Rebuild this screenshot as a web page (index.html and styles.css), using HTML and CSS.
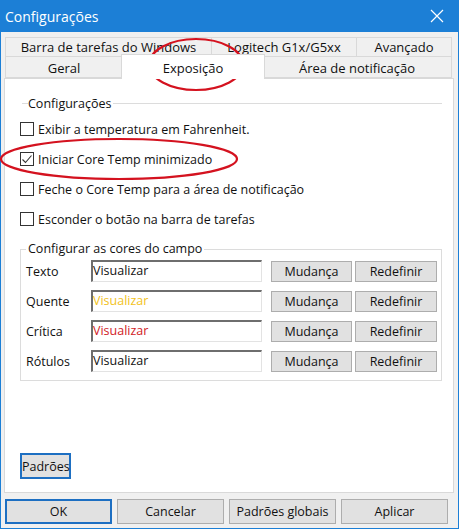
FILE: index.html
```html
<!DOCTYPE html>
<html lang="pt">
<head>
    <meta charset="UTF-8">
    <title>Configurações</title>
    <link rel="stylesheet" href="styles.css">
</head>
<body>
    <div class="window">
        <div class="titlebar">
            <span class="title">Configurações</span>
            <svg class="close" width="14" height="14" viewBox="0 0 14 14">
                <path d="M1 1 L13 13 M13 1 L1 13" stroke="#fff" stroke-width="1.2" fill="none"/>
            </svg>
        </div>
        <div class="dialog">
            <div class="tabs">
                <div class="tab-row">
                    <div class="tab t-barra">Barra de tarefas do Windows</div>
                    <div class="tab t-logi">Logitech G1x/G5xx</div>
                    <div class="tab t-avanc">Avançado</div>
                </div>
                <div class="tab-row">
                    <div class="tab t-geral">Geral</div>
                    <div class="tab t-expo active">Exposição</div>
                    <div class="tab t-area">Área de notificação</div>
                </div>
            </div>
            <div class="panel">
                <div class="section-title"><span>Configurações</span></div>
                <div class="checks">
                    <div class="check"><span class="box"></span>Exibir a temperatura em Fahrenheit.</div>
                    <div class="check"><span class="box">
                        <svg width="12" height="12" viewBox="0 0 12 12"><path d="M1.5 6.5 L4.5 9.5 L10.5 2.5" stroke="#333" stroke-width="1.1" fill="none"/></svg>
                    </span>Iniciar Core Temp minimizado</div>
                    <div class="check"><span class="box"></span>Feche o Core Temp para a área de notificação</div>
                    <div class="check"><span class="box"></span>Esconder o botão na barra de tarefas</div>
                </div>
                <fieldset class="colors">
                    <legend>Configurar as cores do campo</legend>
                    <div class="color-row">
                        <span class="color-label">Texto</span>
                        <div class="preview">Visualizar</div>
                        <button class="btn change">Mudança</button>
                        <button class="btn reset">Redefinir</button>
                    </div>
                    <div class="color-row">
                        <span class="color-label">Quente</span>
                        <div class="preview hot">Visualizar</div>
                        <button class="btn change">Mudança</button>
                        <button class="btn reset">Redefinir</button>
                    </div>
                    <div class="color-row">
                        <span class="color-label">Crítica</span>
                        <div class="preview critical">Visualizar</div>
                        <button class="btn change">Mudança</button>
                        <button class="btn reset">Redefinir</button>
                    </div>
                    <div class="color-row">
                        <span class="color-label">Rótulos</span>
                        <div class="preview">Visualizar</div>
                        <button class="btn change">Mudança</button>
                        <button class="btn reset">Redefinir</button>
                    </div>
                </fieldset>
                <button class="btn focus defaults">Padrões</button>
            </div>
            <div class="actions">
                <button class="btn focus">OK</button>
                <button class="btn">Cancelar</button>
                <button class="btn">Padrões globais</button>
                <button class="btn">Aplicar</button>
            </div>
        </div>
        <svg class="marks" width="459" height="529" viewBox="0 0 459 529">
            <ellipse cx="196" cy="64.5" rx="47" ry="25.5" stroke="#d4121f" stroke-width="2.2" fill="none"/>
            <ellipse cx="119" cy="159" rx="118" ry="20" stroke="#d4121f" stroke-width="2.2" fill="none"/>
        </svg>
    </div>
</body>
</html>
```

FILE: styles.css
```css
* {
    margin: 0;
    padding: 0;
    box-sizing: border-box;
}
body {
    font-family: 'Open Sans', 'Liberation Sans', sans-serif;
    font-size: 12.5px;
    color: #111;
    background: #fff;
}
.window {
    position: relative;
    width: 459px;
    height: 529px;
    background: #f0f0f0;
    border: 1px solid #1c7fd6;
    border-top: 0;
    display: flex;
    flex-direction: column;
}
.titlebar {
    height: 32px;
    margin: 0 -1px;
    background: #1c7fd6;
    color: white;
    display: flex;
    align-items: center;
    justify-content: space-between;
    padding: 0 15px 0 5px;
}
.title {
    font-size: 14px;
}
.dialog {
    padding: 5px 4px 0 3px;
}
.tabs {
    margin: 0 1px;
    font-size: 13px;
}
.tab-row {
    display: flex;
    height: 20px;
}
.tab-row + .tab-row {
    height: 21px;
}
.tab {
    background: #f0f0f0;
    border: 1px solid #d9d9d9;
    border-left: 0;
    text-align: center;
    line-height: 19px;
    white-space: nowrap;
}
.tab:first-child {
    border-left: 1px solid #d9d9d9;
}
.tab-row + .tab-row .tab {
    border-top: 0;
    padding-top: 2px;
}
.t-barra { width: 207px; }
.t-logi { width: 145px; }
.t-avanc { width: 95px; }
.t-geral { width: 118px; }
.t-area { width: 189px; }
.t-expo { width: 140px; }
.tab-row .tab.active {
    position: relative;
    z-index: 1;
    width: 144px;
    margin: -3px -2px -1px;
    background: #fff;
    border: 1px solid #d9d9d9;
    border-bottom: 0;
    line-height: 22px;
    padding-top: 2px;
}
.panel {
    height: 415px;
    background: #fff;
    border: 1px solid #d9d9d9;
    padding: 16px 11px 0 15px;
    display: flex;
    flex-direction: column;
    align-items: flex-start;
}
.section-title {
    display: flex;
    align-items: center;
    width: 100%;
    height: 16px;
}
.section-title::before {
    content: '';
    width: 6px;
    height: 1px;
    background: #dcdcdc;
    margin-left: 2px;
}
.section-title::after {
    content: '';
    flex: 1;
    height: 1px;
    background: #dcdcdc;
}
.section-title span {
    padding: 0 2px 0 0;
}
.checks {
    margin-top: 3px;
}
.check {
    display: flex;
    align-items: center;
    height: 30px;
    white-space: nowrap;
}
.box {
    width: 14px;
    height: 14px;
    border: 1px solid #333;
    background: #fff;
    margin-right: 4px;
    display: flex;
    align-items: center;
    justify-content: center;
}
.colors {
    margin-top: 7px;
    width: 422px;
    border: 1px solid #dcdcdc;
    padding: 0 0 4px 5px;
}
.colors legend {
    margin-left: 0;
    padding: 0 2px;
    line-height: 16px;
}
.color-row {
    display: flex;
    align-items: center;
    height: 30px;
}
.color-row:first-of-type {
    margin-top: -1px;
}
.color-label {
    width: 65px;
}
.preview {
    width: 171px;
    height: 22px;
    border: 1px solid #e3e3e3;
    border-top: 2px solid #6e6e6e;
    border-left: 2px solid #6e6e6e;
    line-height: 18px;
    margin-right: 9px;
}
.preview.hot {
    color: #f2c21b;
}
.preview.critical {
    color: #d11a25;
}
.btn {
    font-family: inherit;
    font-size: 12.5px;
    color: #111;
    background: #e1e1e1;
    border: 1px solid #adadad;
    height: 21px;
    line-height: 19px;
}
.change {
    width: 81px;
    margin-right: 3px;
}
.reset {
    width: 82px;
}
.btn.focus {
    border: 2px solid #1d6fc2;
}
.defaults {
    margin-top: 72px;
    width: 51px;
    height: 26px;
    margin-left: 0;
}
.actions {
    display: flex;
    gap: 5px;
    margin: 6px 0 0 1px;
}
.actions .btn {
    width: 107px;
    height: 25px;
}
.marks {
    position: absolute;
    left: -1px;
    top: 0;
    pointer-events: none;
}
```
